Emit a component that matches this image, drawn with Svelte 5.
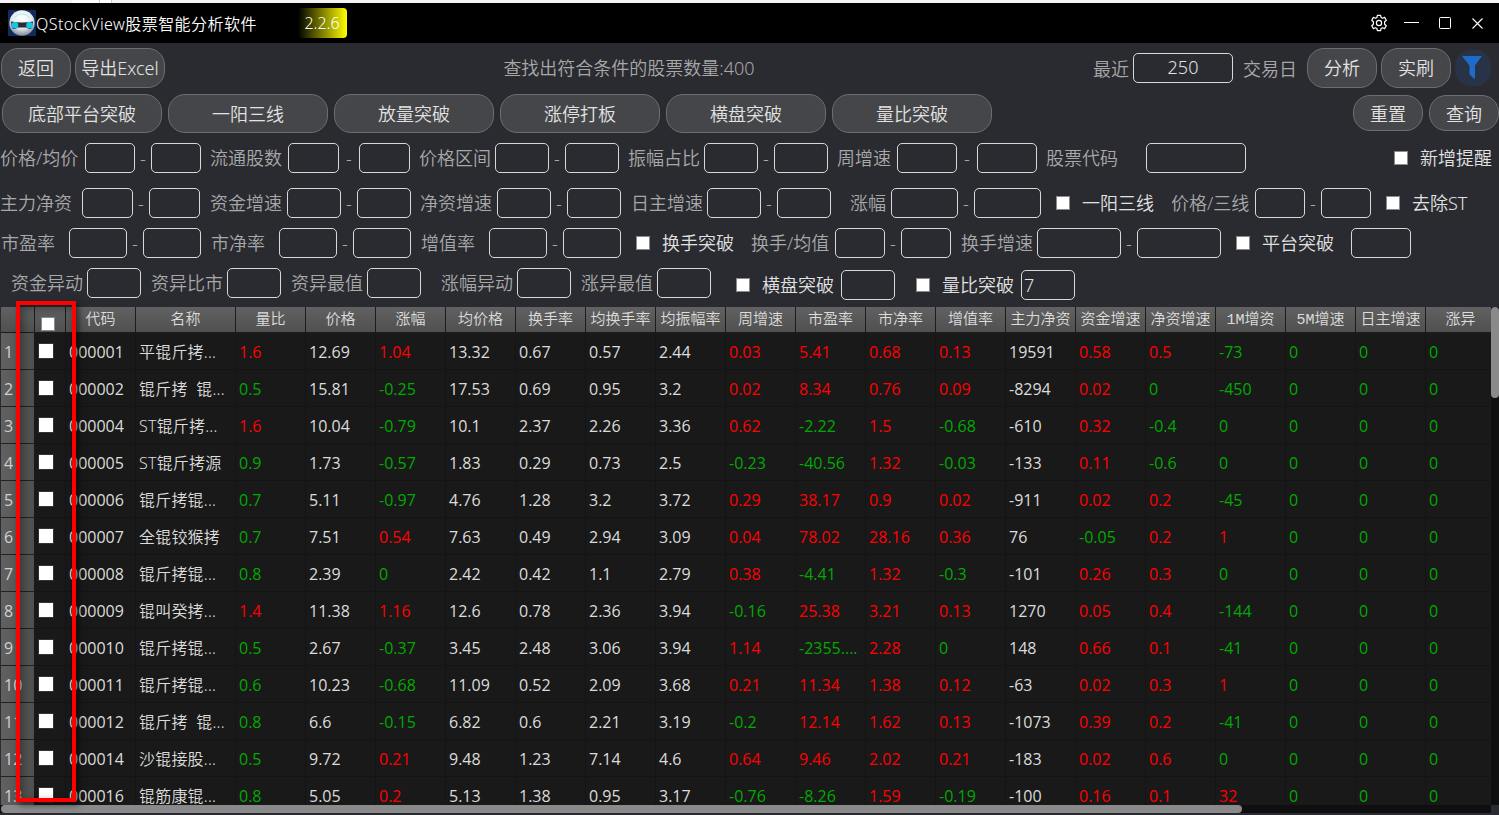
<script lang="ts">
type Field = {
  gap: number;
  check?: boolean;
  label?: string;
  lw?: number;
  w?: number;
  dash?: number;
  value?: string;
};

const strategies = ['底部平台突破', '一阳三线', '放量突破', '涨停打板', '横盘突破', '量比突破'];

// gap: space before, lw: label width, w: input width, dash: width between both inputs of a range
const filterRows: Field[][] = [
  [
    { gap: 0, label: '价格/均价', lw: 85, w: 50, dash: 16 },
    { gap: 9, label: '流通股数', lw: 78, w: 51, dash: 20 },
    { gap: 9, label: '价格区间', lw: 76, w: 54, dash: 16 },
    { gap: 9, label: '振幅占比', lw: 76, w: 54, dash: 16 },
    { gap: 9, label: '周增速', lw: 60, w: 60, dash: 20 },
    { gap: 9, label: '股票代码', lw: 100, w: 100 },
    { gap: 148, check: true, label: '新增提醒', lw: 74 },
  ],
  [
    { gap: 0, label: '主力净资', lw: 82, w: 51, dash: 16 },
    { gap: 10, label: '资金增速', lw: 77, w: 54, dash: 16 },
    { gap: 9, label: '净资增速', lw: 77, w: 54, dash: 16 },
    { gap: 10, label: '日主增速', lw: 76, w: 54, dash: 16 },
    { gap: 19, label: '涨幅', lw: 41, w: 67, dash: 16 },
    { gap: 15, check: true, label: '一阳三线', lw: 72 },
    { gap: 17, label: '价格/三线', lw: 84, w: 50, dash: 16 },
    { gap: 15, check: true, label: '去除ST', lw: 60 },
  ],
  [
    { gap: 1, label: '市盈率', lw: 68, w: 58, dash: 16 },
    { gap: 10, label: '市净率', lw: 68, w: 58, dash: 16 },
    { gap: 10, label: '增值率', lw: 68, w: 58, dash: 16 },
    { gap: 15, check: true, label: '换手突破', lw: 72 },
    { gap: 17, label: '换手/均值', lw: 84, w: 50, dash: 16 },
    { gap: 10, label: '换手增速', lw: 76, w: 84, dash: 16 },
    { gap: 15, check: true, label: '平台突破', lw: 89, w: 60 },
  ],
  [
    { gap: 11, label: '资金异动', lw: 76, w: 54 },
    { gap: 10, label: '资异比市', lw: 76, w: 54 },
    { gap: 10, label: '资异最值', lw: 76, w: 54 },
    { gap: 20, label: '涨幅异动', lw: 76, w: 54 },
    { gap: 10, label: '涨异最值', lw: 76, w: 54 },
    { gap: 25, check: true, label: '横盘突破', lw: 79, w: 54 },
    { gap: 21, check: true, label: '量比突破', lw: 79, w: 54, value: '7' },
  ],
];

const columns = [
  '代码', '名称', '量比', '价格', '涨幅', '均价格', '换手率', '均换手率', '均振幅率', '周增速', '市盈率',
  '市净率', '增值率', '主力净资', '资金增速', '净资增速', '1M增资', '5M增速', '日主增速', '涨异',
];

// columns without red / green
const plain = [0, 1, 3, 5, 6, 7, 8, 13];

const rows = [
  ['000001', '平锟斤拷...', '1.6', '12.69', '1.04', '13.32', '0.67', '0.57', '2.44', '0.03', '5.41', '0.68', '0.13', '19591', '0.58', '0.5', '-73', '0', '0', '0'],
  ['000002', '锟斤拷  锟...', '0.5', '15.81', '-0.25', '17.53', '0.69', '0.95', '3.2', '0.02', '8.34', '0.76', '0.09', '-8294', '0.02', '0', '-450', '0', '0', '0'],
  ['000004', 'ST锟斤拷...', '1.6', '10.04', '-0.79', '10.1', '2.37', '2.26', '3.36', '0.62', '-2.22', '1.5', '-0.68', '-610', '0.32', '-0.4', '0', '0', '0', '0'],
  ['000005', 'ST锟斤拷源', '0.9', '1.73', '-0.57', '1.83', '0.29', '0.73', '2.5', '-0.23', '-40.56', '1.32', '-0.03', '-133', '0.11', '-0.6', '0', '0', '0', '0'],
  ['000006', '锟斤拷锟...', '0.7', '5.11', '-0.97', '4.76', '1.28', '3.2', '3.72', '0.29', '38.17', '0.9', '0.02', '-911', '0.02', '0.2', '-45', '0', '0', '0'],
  ['000007', '全锟铰猴拷', '0.7', '7.51', '0.54', '7.63', '0.49', '2.94', '3.09', '0.04', '78.02', '28.16', '0.36', '76', '-0.05', '0.2', '1', '0', '0', '0'],
  ['000008', '锟斤拷锟...', '0.8', '2.39', '0', '2.42', '0.42', '1.1', '2.79', '0.38', '-4.41', '1.32', '-0.3', '-101', '0.26', '0.3', '0', '0', '0', '0'],
  ['000009', '锟叫癸拷...', '1.4', '11.38', '1.16', '12.6', '0.78', '2.36', '3.94', '-0.16', '25.38', '3.21', '0.13', '1270', '0.05', '0.4', '-144', '0', '0', '0'],
  ['000010', '锟斤拷锟...', '0.5', '2.67', '-0.37', '3.45', '2.48', '3.06', '3.94', '1.14', '-2355....', '2.28', '0', '148', '0.66', '0.1', '-41', '0', '0', '0'],
  ['000011', '锟斤拷锟...', '0.6', '10.23', '-0.68', '11.09', '0.52', '2.09', '3.68', '0.21', '11.34', '1.38', '0.12', '-63', '0.02', '0.3', '1', '0', '0', '0'],
  ['000012', '锟斤拷  锟...', '0.8', '6.6', '-0.15', '6.82', '0.6', '2.21', '3.19', '-0.2', '12.14', '1.62', '0.13', '-1073', '0.39', '0.2', '-41', '0', '0', '0'],
  ['000014', '沙锟接股...', '0.5', '9.72', '0.21', '9.48', '1.23', '7.14', '4.6', '0.64', '9.46', '2.02', '0.21', '-183', '0.02', '0.6', '0', '0', '0', '0'],
  ['000016', '锟筋康锟...', '0.8', '5.05', '0.2', '5.13', '1.38', '0.95', '3.17', '-0.76', '-8.26', '1.59', '-0.19', '-100', '0.16', '0.1', '32', '0', '0', '0'],
];

function tone(value: string, col: number) {
  if (plain.includes(col)) {
    return '';
  }
  // volume ratio is compared with 1, everything else with 0
  const base = col == 2 ? 1 : 0;
  return parseFloat(value) > base ? 'up' : 'down';
}
</script>

<div class="window">
  <div class="edge"></div>
  <div class="titlebar">
    <svg class="logo" width="28" height="26" viewBox="0 0 28 26">
      <defs>
        <radialGradient id="head" cx="50%" cy="30%" r="70%">
          <stop offset="0" stop-color="#ffffff" />
          <stop offset="0.6" stop-color="#e4e8ec" />
          <stop offset="1" stop-color="#7d8896" />
        </radialGradient>
      </defs>
      <rect width="28" height="26" fill="#102a5c" />
      <circle cx="14" cy="13" r="12.700" fill="url(#head)" />
      <path d="M6 7.500Q14 .5 22 7.500" fill="none" stroke="#a8f0f4" stroke-width="1" />
      <path d="M3 11.500Q14 13.500 25 11.500L24 18Q21 20 18.500 17.500H9.500Q7 20 4 18Z" fill="#252d35" />
      <circle cx="7" cy="15.200" r="3.300" fill="#14c8e4" />
      <circle cx="21.500" cy="15.200" r="3.300" fill="#14c8e4" />
    </svg>
    <span class="title">QStockView股票智能分析软件</span>
    <span class="version">2.2.6</span>
    <div class="controls">
      <svg width="18" height="18" viewBox="0 0 18 18" fill="none" stroke="#fff" stroke-width="1.200" stroke-linejoin="round">
        <path d="M7.400 1.300h3.200l.5 2.200 1.300.7 2.200-.8 1.700 2.800-1.700 1.600v2.400l1.700 1.600-1.700 2.800-2.200-.8-1.300.7-.5 2.200H7.400l-.5-2.200-1.300-.7-2.200.8-1.700-2.800 1.700-1.600V7.800L1.700 6.200l1.700-2.800 2.200.8 1.300-.7z" />
        <circle cx="9" cy="9" r="2.600" />
      </svg>
      <svg width="15" height="14" viewBox="0 0 15 14"><path d="M0 6.500h15" stroke="#fff" /></svg>
      <svg width="12" height="12" viewBox="0 0 12 12"><rect x=".5" y=".5" width="11" height="11" rx="1" fill="none" stroke="#fff" /></svg>
      <svg width="11" height="11" viewBox="0 0 11 11"><path d="M.5.500l10 10M10.500.500l-10 10" stroke="#fff" stroke-width="1.100" /></svg>
    </div>
  </div>

  <div class="toolbar">
    <button class="btn">返回</button>
    <button class="btn export">导出Excel</button>
    <span class="summary">查找出符合条件的股票数量:400</span>
    <span class="recent">最近</span>
    <input class="box days" value="250" />
    <span class="unit">交易日</span>
    <button class="btn">分析</button>
    <button class="btn">实刷</button>
    <div class="filter">
      <svg width="20" height="23" viewBox="0 0 20 23"><path d="M0 0h20l-7 9.500v12.800l-1 .5L7.500 18.500v-9z" fill="#1f6bc8" /></svg>
    </div>
  </div>

  <div class="strategies">
    {#each strategies as name}
      <button class="btn wide">{name}</button>
    {/each}
    <div class="actions">
      <button class="btn short">重置</button>
      <button class="btn short">查询</button>
    </div>
  </div>

  <div class="filters">
    {#each filterRows as fields}
      <div class="filter-row">
        {#each fields as f}
          <div class="field" class:check={f.check} style="margin-left: {f.gap}px">
            {#if f.check}
              <span class="tick"></span>
            {/if}
            <span class="label" style="width: {f.lw}px">{f.label}</span>
            {#if f.w}
              <input class="box" style="width: {f.w}px" value={f.value ?? ''} />
            {/if}
            {#if f.dash}
              <span class="dash" style="width: {f.dash}px">-</span>
              <input class="box" style="width: {f.w}px" />
            {/if}
          </div>
        {/each}
      </div>
    {/each}
  </div>

  <div class="table-area">
    <div class="table">
      <div class="row head">
        <div class="num"></div>
        <div class="pick"><span class="tick"></span></div>
        {#each columns as name, i}
          <div class="cell" class:name={i == 1}>{name}</div>
        {/each}
      </div>
      {#each rows as row, r}
        <div class="row">
          <div class="num">{r + 1}</div>
          <div class="pick"><span class="tick"></span></div>
          {#each row as value, i}
            <div class="cell {tone(value, i)}" class:name={i == 1}>{value}</div>
          {/each}
        </div>
      {/each}
    </div>
    <div class="vscroll"><div class="vthumb"></div></div>
  </div>
  <div class="hscroll"><div class="hthumb"></div></div>

  <div class="marker"></div>
</div>

<style>
:global(body) {
  margin: 0;
  background: #2a2b30;
}

.window {
  position: relative;
  box-sizing: border-box;
  width: 1499px;
  height: 815px;
  overflow: hidden;
  background: #2a2b30;
  color: #dcdcdc;
  font-family: 'Noto Sans', 'Noto Sans CJK SC', sans-serif;
  font-size: 18px;
  font-weight: 350;
  display: flex;
  flex-direction: column;
}

.window * {
  box-sizing: border-box;
}

.edge {
  flex: none;
  height: 3px;
  background: linear-gradient(
    to right,
    #f3f3f3 72px, #fff 72px, #fff 99px, #ccc 99px, #ccc 100px, #fff 100px,
    #fff 111px, #ccc 111px, #ccc 112px, #f3f3f3 112px
  );
}

.titlebar {
  flex: none;
  display: flex;
  align-items: center;
  height: 40px;
  padding-left: 8px;
  background: #000;
  color: #fff;
}

.title {
  flex: none;
  width: 262px;
  font-size: 16px;
  letter-spacing: 0.45px;
  white-space: nowrap;
}

.version {
  width: 49px;
  height: 30px;
  padding-right: 1px;
  line-height: 31px;
  text-align: center;
  font-size: 16px;
  border-radius: 4px;
  background: linear-gradient(to right, #000, #ffff00);
}

.controls {
  display: flex;
  align-items: center;
  margin-left: auto;
  padding-right: 16px;
}

.controls svg + svg {
  margin-left: 16px;
}

.controls svg:nth-child(3) {
  margin-left: 20px;
}

.controls svg:last-child {
  margin-left: 21px;
}

.toolbar {
  flex: none;
  display: flex;
  align-items: center;
  height: 51px;
  padding: 0 0 2px 1px;
  color: #a8a8a9;
}

.btn {
  flex: none;
  width: 70px;
  height: 40px;
  margin: 0 4px 0 0;
  padding: 0 0 1px;
  border: 1px solid #6c6d70;
  border-radius: 17px;
  background: #454649;
  color: #e2e2e2;
  font: inherit;
  white-space: nowrap;
}

.export {
  width: 90px;
}

.summary {
  flex: none;
  width: 924px;
  padding: 0 4px 1px 0;
  text-align: center;
}

.recent {
  flex: none;
  width: 36px;
}

.box {
  flex: none;
  height: 30px;
  margin: 0;
  padding: 0 2px 1px;
  border: 1px solid #d8d8d8;
  border-radius: 5px;
  outline: none;
  background: transparent;
  color: #e2e2e2;
  font: inherit;
}

.days {
  width: 100px;
  margin: 0 10px 0 4px;
  text-align: center;
}

.unit {
  flex: none;
  width: 64px;
}

.filter {
  flex: none;
  display: flex;
  align-items: center;
  justify-content: center;
  width: 36px;
  height: 36px;
  padding-right: 2px;
  border-radius: 16px;
  background: #283347;
}

.strategies {
  flex: none;
  display: flex;
  height: 39px;
  padding-left: 2px;
}

.wide {
  width: 160px;
  height: 39px;
  margin-right: 6px;
}

.actions {
  display: flex;
  gap: 6px;
  margin-left: auto;
  padding-top: 1px;
}

.short {
  height: 36px;
  margin: 0;
}

.filters {
  flex: none;
  height: 174px;
  padding-top: 10px;
}

.filter-row {
  display: flex;
  height: 30px;
  margin-bottom: 10px;
}

.filter-row:first-child {
  margin-bottom: 15px;
}

.field {
  flex: none;
  display: flex;
  align-items: center;
  height: 30px;
}

.label {
  padding-bottom: 2px;
  color: #a8a8a9;
  white-space: nowrap;
}

.check .label {
  color: #e2e2e2;
}

.filter-row:last-child .check {
  padding-top: 2px;
  height: 32px;
}

.dash {
  text-align: center;
  color: #a8a8a9;
}

.tick {
  flex: none;
  width: 14px;
  height: 14px;
  border: 1px solid #8a8a8a;
  background: #fff;
}

.check .tick {
  margin-right: 12px;
}

.table-area {
  flex: none;
  display: flex;
  height: 498px;
  padding-left: 1px;
}

.table {
  width: 1490px;
  height: 498px;
  overflow: hidden;
  background: #191919;
}

.row {
  display: flex;
  width: 1495px;
  height: 37px;
  font-family: 'Open Sans', 'Noto Sans CJK SC', sans-serif;
  font-size: 16px;
  font-weight: 400;
  line-height: 38px;
}

.num {
  flex: none;
  width: 34px;
  padding-left: 3px;
  border-right: 1px solid #191919;
  border-bottom: 1px solid #222;
  background: linear-gradient(to right, #616161, #505050);
  color: #d0d0d0;
}

.pick {
  flex: none;
  width: 31px;
  padding: 10px 0 0 3px;
  border-right: 1px solid #141414;
  border-bottom: 1px solid #141414;
}

.pick .tick {
  display: block;
  width: 16px;
  height: 16px;
  border-color: #333;
}

.cell {
  flex: none;
  width: 70px;
  padding-left: 3px;
  border-right: 1px solid #141414;
  border-bottom: 1px solid #141414;
  white-space: pre;
  overflow: hidden;
}

.cell.name {
  width: 100px;
  font-family: 'Noto Sans', 'Noto Sans CJK SC', sans-serif;
  font-weight: 350;
  letter-spacing: 0.2px;
}

.up {
  color: #ff0000;
}

.down {
  color: #00aa00;
}

.head,
.head .cell.name {
  height: 26px;
  font-family: 'Liberation Mono', 'Noto Sans CJK SC', monospace;
  font-size: 15px;
  font-weight: 350;
  line-height: 27px;
}

.head .cell,
.head .pick,
.head .num {
  border-right: 1px solid #1c1c1c;
  border-bottom: 1px solid #1c1c1c;
  background: linear-gradient(to bottom, #616161, #505050);
}

.head .cell {
  padding: 0;
  text-align: center;
}

.head .pick {
  padding: 10px 0 0 6px;
}

.head .tick {
  width: 14px;
  height: 14px;
  border-color: #8a8a8a;
}

.vscroll {
  width: 8px;
  background: #0f0f0f;
}

.vthumb {
  height: 91px;
  border-radius: 4px;
  background: #8a8a8a;
}

.hscroll {
  flex: none;
  width: 1491px;
  height: 8px;
  padding-left: 1px;
  background: #0f0f0f;
}

.hthumb {
  width: 1241px;
  height: 8px;
  border-radius: 4px;
  background: #8a8a8a;
}

/* highlights the selection column */
.marker {
  position: absolute;
  left: 16px;
  top: 301px;
  width: 60px;
  height: 501px;
  border: 4px solid #ff0000;
  box-shadow: 3px 3px 6px rgba(0, 0, 0, 0.5), inset 3px 3px 8px rgba(0, 0, 0, 0.4);
}
</style>
